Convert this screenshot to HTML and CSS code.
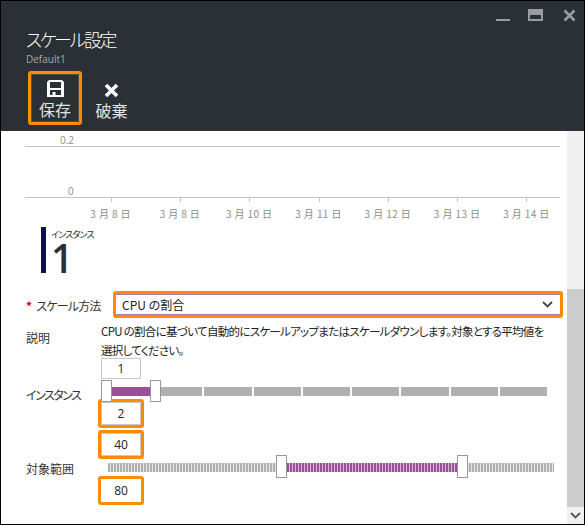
FILE: index.html
```html
<!DOCTYPE html>
<html lang="ja">
<head>
    <meta charset="UTF-8">
    <title>スケール設定</title>
    <link rel="stylesheet" href="styles.css">
</head>
<body>
    <div class="blade">
        <header class="head">
            <div class="win-btns">
                <svg width="14" height="13" viewBox="0 0 14 13"><rect x="0" y="10" width="14" height="2" fill="#9a9da0"/></svg>
                <svg width="15" height="13" viewBox="0 0 15 13"><path d="M0 0h15v12H0z M2 6v4h11V6z" fill="#9a9da0" fill-rule="evenodd"/></svg>
                <svg class="win-close" width="13" height="13" viewBox="0 0 13 13"><path d="M1.500 1.500l10 10M11.500 1.500l-10 10" stroke="#9a9da0" stroke-width="2.600" fill="none"/></svg>
            </div>
            <h1 class="title">スケール設定</h1>
            <div class="subtitle">Default1</div>
            <div class="cmds">
                <div class="cmd hl">
                    <svg width="17" height="17" viewBox="0 0 17 17"><path d="M2 0h13l2 2v15H0V2z M3 2v6h11V2z M3 10v5h2.500v-3h3v3H14v-5z" fill="#fff" fill-rule="evenodd"/></svg>
                    <span>保存</span>
                </div>
                <div class="cmd">
                    <svg width="15" height="15" viewBox="0 0 15 15"><path d="M2 2l11 11M13 2L2 13" stroke="#fff" stroke-width="3.600" fill="none"/></svg>
                    <span>破棄</span>
                </div>
            </div>
        </header>
        <div class="body">
            <main class="content">
                <section class="chart">
                    <div class="tick-label first">0.2</div>
                    <div class="gridline"></div>
                    <div class="tick-label second">0</div>
                    <div class="gridline"></div>
                    <div class="axis">
                        <div class="day">3 月 8 日</div>
                        <div class="day">3 月 8 日</div>
                        <div class="day">3 月 10 日</div>
                        <div class="day">3 月 11 日</div>
                        <div class="day">3 月 12 日</div>
                        <div class="day">3 月 13 日</div>
                        <div class="day">3 月 14 日</div>
                    </div>
                </section>
                <section class="metric">
                    <div class="metric-bar"></div>
                    <div>
                        <div class="metric-name">インスタンス</div>
                        <div class="metric-val">1</div>
                    </div>
                </section>
                <div class="row row-method">
                    <label class="lbl"><span class="req">*</span>スケール方法</label>
                    <div class="select">
                        <span>CPU の割合</span>
                        <svg width="11" height="7" viewBox="0 0 11 7"><path d="M1 1l4.500 4.500L10 1" stroke="#444" stroke-width="1.800" fill="none"/></svg>
                    </div>
                </div>
                <div class="row row-desc">
                    <div class="lbl desc-lbl">説明</div>
                    <p class="desc">CPU の割合に基づいて自動的にスケールアップまたはスケールダウンします。対象とする平均値を選択してください。</p>
                </div>
                <div class="row row-slider">
                    <div class="lbl lbl-kana">インスタンス</div>
                    <div class="slider-col">
                        <div class="numbox plain">1</div>
                        <div class="seg-track">
                            <div class="seg on"></div>
                            <div class="seg"></div>
                            <div class="seg"></div>
                            <div class="seg"></div>
                            <div class="seg"></div>
                            <div class="seg"></div>
                            <div class="seg"></div>
                            <div class="seg"></div>
                            <div class="seg"></div>
                            <div class="thumb thumb-a"></div>
                            <div class="thumb thumb-b"></div>
                        </div>
                        <div class="numbox marked edged">2</div>
                    </div>
                </div>
                <div class="row row-slider row-range">
                    <div class="lbl">対象範囲</div>
                    <div class="slider-col">
                        <div class="numbox marked edged">40</div>
                        <div class="stripe-track">
                            <div class="stripes off-left"></div>
                            <div class="stripes on-mid"></div>
                            <div class="stripes off-right"></div>
                            <div class="thumb thumb-c"></div>
                            <div class="thumb thumb-d"></div>
                        </div>
                        <div class="numbox marked">80</div>
                    </div>
                </div>
            </main>
            <div class="scrollbar">
                <div class="sb-thumb"></div>
                <svg class="sb-arrow" width="11" height="7" viewBox="0 0 11 7"><path d="M1 1l4.500 4.500L10 1" stroke="#555" stroke-width="1.800" fill="none"/></svg>
            </div>
        </div>
    </div>
</body>
</html>
```

FILE: styles.css
```css
* {
    box-sizing: border-box;
}
html, body {
    margin: 0;
    padding: 0;
}
body {
    width: 585px;
    height: 525px;
    overflow: hidden;
    font-family: "Noto Sans CJK JP", "Open Sans", sans-serif;
    font-feature-settings: "palt";
    color: #333;
}
.blade {
    width: 585px;
    height: 525px;
    border: 1px solid #000;
    display: flex;
    flex-direction: column;
    background: #fff;
}
.head {
    height: 130px;
    background: #2a3035;
    padding: 0 0 0 25px;
    position: relative;
    color: #fff;
    flex: none;
}
.win-btns {
    position: absolute;
    top: 8px;
    right: 8px;
    display: flex;
    gap: 18px;
}
.win-close {
    margin-left: 2px;
}
.title {
    margin: 0;
    padding-top: 26px;
    font-size: 18px;
    line-height: 24px;
    letter-spacing: -2.4px;
    font-weight: 300;
}
.subtitle {
    font-family: "Open Sans", sans-serif;
    font-size: 10px;
    line-height: 14px;
    margin-top: 1px;
    color: #a8abae;
}
.cmds {
    display: flex;
    margin: 5px 0 0 2px;
}
.cmd {
    width: 53px;
    height: 54px;
    display: flex;
    flex-direction: column;
    align-items: center;
    padding-top: 12px;
    font-size: 16px;
    line-height: 20px;
    color: #e4e5e6;
}
.cmd span {
    margin-top: 2px;
}
.cmd.hl {
    width: 54px;
    border: 3px solid #ff8c00;
    border-radius: 3px;
    box-shadow: inset 0 0 0 1px #50504a;
    padding-top: 6px;
}
.cmd + .cmd {
    margin-left: 3px;
}
.body {
    flex: 1;
    display: flex;
    min-height: 0;
}
.content {
    flex: 1;
    padding-left: 24px;
    min-width: 0;
}
.chart {
    width: 535px;
    padding-top: 4px;
}
.tick-label {
    font-family: "Open Sans", sans-serif;
    font-size: 10px;
    line-height: 11px;
    color: #8c8c8c;
    padding-left: 35px;
}
.tick-label.second {
    padding-left: 43px;
    margin-top: 39px;
}
.gridline {
    height: 1px;
    background: #c4c4c4;
}
.axis {
    display: grid;
    grid-template-columns: repeat(7, 69.3px);
    padding-left: 51px;
}
.day {
    height: 29px;
    padding-top: 9px;
    text-align: center;
    font-size: 10px;
    line-height: 14px;
    color: #8c8c8c;
    letter-spacing: 0.4px;
    position: relative;
}
.day::before {
    content: "";
    position: absolute;
    top: 0;
    left: 50%;
    width: 1px;
    height: 4px;
    background: #c4c4c4;
}
.metric {
    display: flex;
    margin-left: 16px;
    gap: 5px;
    height: 46px;
}
.metric-bar {
    width: 5px;
    background: #0b1148;
}
.metric-name {
    padding-top: 1px;
    font-size: 9px;
    line-height: 14px;
    letter-spacing: -0.8px;
    color: #222;
}
.metric-val {
    font-family: "Open Sans", sans-serif;
    font-size: 39px;
    line-height: 32px;
    font-weight: 600;
    color: #2a3035;
}
.row {
    display: flex;
}
.lbl {
    width: 73px;
    flex: none;
    padding-left: 1px;
    font-size: 12px;
    color: #333;
}
.req {
    color: #d80000;
    font-weight: 700;
    margin-right: 5px;
}
.row-method {
    margin-top: 18px;
    align-items: center;
}
.row-method .lbl {
    width: 88px;
    padding-top: 2px;
    letter-spacing: -0.8px;
}
.select {
    width: 450px;
    height: 27px;
    border: 3px solid #ff8c00;
    border-radius: 3px;
    box-shadow: inset 0 1px 0 #a77fae, inset 0 -1px 0 #a77fae;
    padding: 0 7px 0 6px;
    display: flex;
    align-items: center;
    justify-content: space-between;
    font-size: 12px;
    color: #222;
}
.row-desc {
    margin-top: 4px;
    height: 36px;
}
.desc-lbl {
    width: 76px;
    padding-top: 7px;
}
.desc {
    margin: 0;
    width: 448px;
    font-size: 11.5px;
    line-height: 19px;
    letter-spacing: -0.7px;
    color: #222;
}
.slider-col {
    flex: 1;
    position: relative;
}
.numbox {
    text-align: center;
    font-size: 12px;
    color: #222;
    font-family: "Open Sans", "Noto Sans CJK JP", sans-serif;
}
.numbox.plain {
    width: 40px;
    height: 21px;
    line-height: 19px;
    margin-left: 3px;
    border: 1px solid #c8c8c8;
}
.numbox.marked {
    width: 46px;
    height: 29px;
    line-height: 23px;
    border: 3px solid #ff8c00;
    border-radius: 3px;
}
.numbox.edged {
    box-shadow: inset 0 0 0 1px #c8c8c8;
}
.row-slider .lbl {
    width: 73px;
    padding-top: 28px;
}
.row-slider .lbl-kana {
    letter-spacing: -1.5px;
}
.row-range .lbl {
    padding-top: 30px;
}
.seg-track {
    position: relative;
    display: flex;
    gap: 2px;
    width: 441px;
    height: 20px;
    margin-left: 8px;
    padding: 8px 0 3px;
}
.seg {
    flex: 1;
    background: #b0b0b0;
}
.seg.on {
    background: #9b4f96;
}
.thumb {
    position: absolute;
    top: 1px;
    width: 11px;
    height: 22px;
    background: #fff;
    border: 1px solid #999;
}
.thumb-a {
    left: -5px;
}
.thumb-b {
    left: 44px;
}
.row-range {
    margin-top: 2px;
}
.stripe-track {
    position: relative;
    display: flex;
    width: 446px;
    height: 17px;
    margin-left: 10px;
    padding: 4px 0;
}
.stripes {
    height: 9px;
}
.off-left {
    width: 173px;
    flex: none;
}
.off-right {
    flex: 1;
}
.off-left,
.off-right {
    background: repeating-linear-gradient(to right, #b0b0b0 0 2px, #e6e6e6 2px 3px);
}
.on-mid {
    width: 182px;
    flex: none;
    background: repeating-linear-gradient(to right, #9b4f96 0 2px, #d8b8d6 2px 3px);
}
.stripe-track .thumb {
    top: -4px;
    height: 23px;
}
.thumb-c {
    left: 168px;
}
.thumb-d {
    left: 349px;
}
.scrollbar {
    width: 17px;
    flex: none;
    background: #f0f0f0;
    position: relative;
}
.sb-thumb {
    position: absolute;
    top: 158px;
    bottom: 17px;
    left: 0;
    right: 0;
    background: #cdcdcd;
}
.sb-arrow {
    position: absolute;
    bottom: 5px;
    left: 3px;
}
```
